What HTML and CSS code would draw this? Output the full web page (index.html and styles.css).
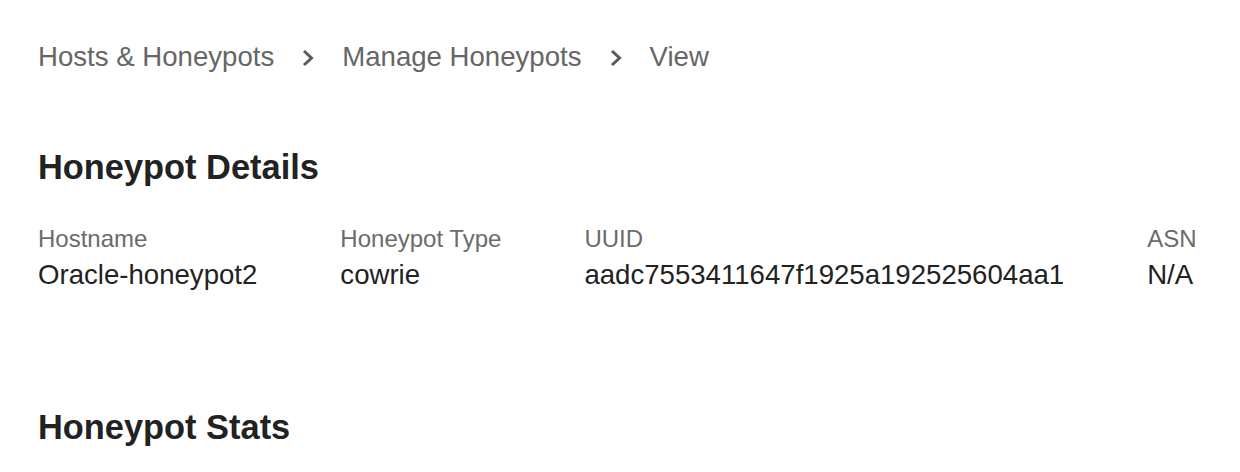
FILE: index.html
```html
<!DOCTYPE html>
<html lang="en">
<head>
<meta charset="utf-8">
<title>Honeypot View</title>
<link rel="stylesheet" href="styles.css">
</head>
<body>
<main class="page">
  <nav class="breadcrumb">
    <span class="crumb">Hosts &amp; Honeypots</span>
    <svg class="chev" width="14" height="18" viewBox="0 0 14 18"><path d="M3 2 L10.5 9 L3 16" fill="none" stroke="#5a5a5a" stroke-width="3"/></svg>
    <span class="crumb">Manage Honeypots</span>
    <svg class="chev" width="14" height="18" viewBox="0 0 14 18"><path d="M3 2 L10.5 9 L3 16" fill="none" stroke="#5a5a5a" stroke-width="3"/></svg>
    <span class="crumb">View</span>
  </nav>

  <section class="details">
    <h2 class="title">Honeypot Details</h2>
    <div class="fields">
      <div class="field">
        <div class="label">Hostname</div>
        <div class="value">Oracle-honeypot2</div>
      </div>
      <div class="field">
        <div class="label">Honeypot Type</div>
        <div class="value">cowrie</div>
      </div>
      <div class="field">
        <div class="label">UUID</div>
        <div class="value">aadc7553411647f1925a192525604aa1</div>
      </div>
      <div class="field">
        <div class="label">ASN</div>
        <div class="value">N/A</div>
      </div>
    </div>
  </section>

  <section class="stats">
    <h2 class="title">Honeypot Stats</h2>
  </section>
</main>
</body>
</html>
```

FILE: styles.css
```css
html, body {
  margin: 0;
  padding: 0;
  background: #ffffff;
}
body {
  font-family: "Liberation Sans", Arial, Helvetica, sans-serif;
  color: #222222;
}
.page {
  padding: 40px 38px 0 38px;
}
.breadcrumb {
  display: flex;
  align-items: center;
  gap: 27px;
  height: 34px;
}
.crumb {
  font-size: 27.6px;
  color: #666666;
  line-height: 34px;
}
.chev {
  display: block;
  margin-top: 2px;
}
.title {
  margin: 0;
  font-size: 34.4px;
  font-weight: bold;
  color: #222222;
  line-height: 40px;
}
.details {
  margin-top: 73px;
}
.fields {
  display: flex;
  gap: 83px;
  margin-top: 37px;
}
.label {
  font-size: 24px;
  color: #6b6b6b;
  line-height: 30px;
}
.value {
  font-size: 27.6px;
  color: #222222;
  line-height: 36px;
  margin-top: 3px;
}
.stats {
  margin-top: 114px;
}
```
